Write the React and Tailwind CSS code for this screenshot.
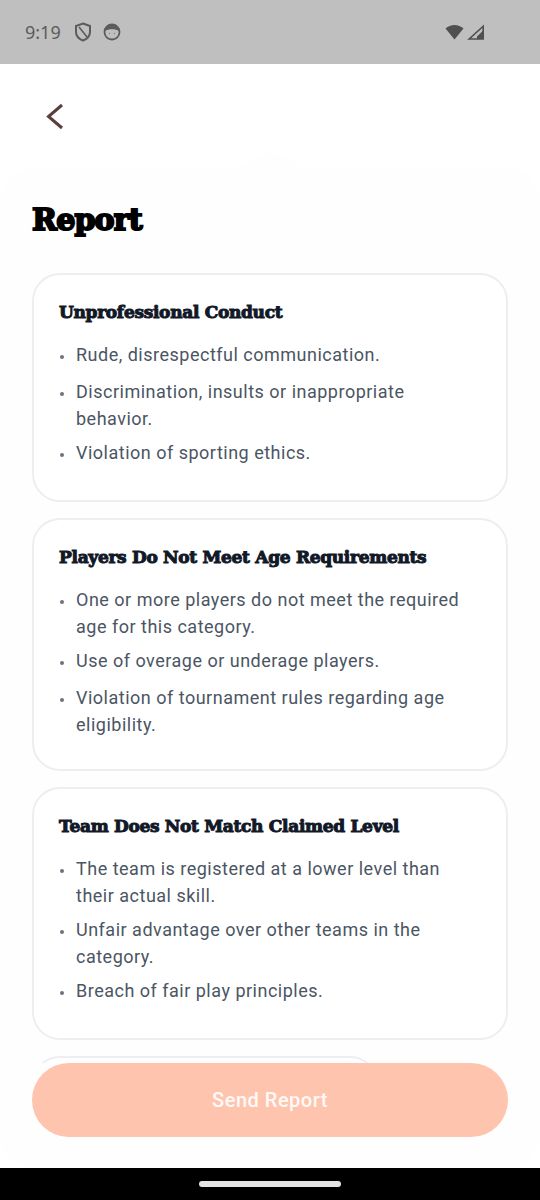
const sections = [
  {
    title: 'Unprofessional Conduct',
    items: ['Rude, disrespectful communication.', 'Discrimination, insults or inappropriate behavior.', 'Violation of sporting ethics.'],
  },
  {
    title: 'Players Do Not Meet Age Requirements',
    items: ['One or more players do not meet the required age for this category.', 'Use of overage or underage players.', 'Violation of tournament rules regarding age eligibility.'],
  },
  {
    title: 'Team Does Not Match Claimed Level',
    items: ['The team is registered at a lower level than their actual skill.', 'Unfair advantage over other teams in the category.', 'Breach of fair play principles.'],
  },
];

function StatusBar() {
  return (
    <div className="h-16 shrink-0 bg-[#bfbfbf] flex items-center pl-[25px] pr-[55px] text-[#5c5c5c]">
      <span className="text-[18px] font-['Noto_Sans',sans-serif] leading-none">9:19</span>
      <svg className="ml-[13px]" width="18" height="20" viewBox="0 0 18 20" fill="none" stroke="currentColor" strokeWidth="2">
        <path d="M9 1.5 L16 4 V10 C16 14 13 17 9 18.5 C5 17 2 14 2 10 V4 Z" />
        <path d="M5 5 L13 15" strokeWidth="1.6" />
      </svg>
      <svg className="ml-[11px]" width="18" height="18" viewBox="0 0 18 18" fill="none">
        <circle cx="9" cy="9" r="7.5" stroke="currentColor" strokeWidth="1.8" />
        <path d="M2 8 C3 3 6 1.5 9 1.5 C12 1.5 15 3 16 8 C13 5.5 5 5.5 2 8 Z" fill="currentColor" />
        <circle cx="6.5" cy="10.5" r="0.7" fill="currentColor" opacity="0.6" />
        <circle cx="11.5" cy="10.5" r="0.7" fill="currentColor" opacity="0.6" />
      </svg>
      <div className="ml-auto flex items-center gap-[2px]">
        <svg width="20" height="16" viewBox="0 0 20 16" fill="#4f4f4f">
          <path d="M0.5 4.5 C3 2.2 6.3 1 9.5 1 C12.7 1 16 2.2 18.5 4.5 L9.5 15.5 Z" />
        </svg>
        <svg width="18" height="16" viewBox="0 0 18 16" fill="none" stroke="#4f4f4f" strokeWidth="1.6">
          <path d="M16.2 2.2 V15 H2.2 Z" />
          <path d="M16.2 6.5 L10 12.5 V15 H16.2 Z" fill="#4f4f4f" stroke="none" />
        </svg>
      </div>
    </div>
  );
}

function ReportCard({ title, items, className = '' }) {
  return (
    <div className={`rounded-[28px] border-2 border-[#eceef1] bg-white pl-[25px] pr-[35px] pt-[25px] pb-[31px] ${className}`}>
      <h2 className="font-['DejaVu_Serif',serif] font-bold text-[17px] leading-[24px] tracking-[-0.3px] text-[#111827] [-webkit-text-stroke:1px_#111827] whitespace-nowrap">
        {title}
      </h2>
      <ul className="mt-[18px] flex flex-col gap-[8px]">
        {items.map((item) => (
          <li key={item} className="flex min-h-[29px] text-[18px] leading-[26.5px] tracking-[0.5px] text-[#4b5563]">
            <span className="w-[17px] shrink-0 pt-[13px] pl-[1px]">
              <span className="block w-[4px] h-[4px] rounded-full bg-[#6b7280]" />
            </span>
            <span>{item}</span>
          </li>
        ))}
      </ul>
    </div>
  );
}

export default function App() {
  return (
    <div className="w-[540px] h-[1200px] overflow-hidden bg-white flex flex-col font-['Roboto',sans-serif]">
      <StatusBar />
      <div className="h-[104px] shrink-0 pl-[44px] pt-[37px]">
        <svg width="22" height="30" viewBox="0 0 22 30" fill="none" stroke="#5a3f3a" strokeWidth="3">
          <path d="M18 4 L4.5 15.5 L18 27" />
        </svg>
      </div>
      <div className="relative flex-1 min-h-0 flex flex-col rounded-[32px] bg-[#fefefe] px-8">
        <svg className="absolute left-[230px] top-[-16px]" width="80" height="17" viewBox="0 0 80 17" fill="#fefefe">
          <path d="M0 17 C14 17 24 1 40 1 C56 1 66 17 80 17 Z" />
        </svg>
        <h1 className="mt-[30px] h-[44px] shrink-0 font-['DejaVu_Serif',serif] font-bold text-[30px] leading-[44px] tracking-[-0.8px] text-black [-webkit-text-stroke:2px_#000]">
          Report
        </h1>
        <div className="mt-[31px] flex-1 min-h-0 overflow-hidden flex flex-col gap-[16px]">
          {sections.map((s) => (
            <ReportCard key={s.title} {...s} className="shrink-0" />
          ))}
          <div className="w-[346px] h-[60px] shrink-0 rounded-[28px] border-2 border-[#eceef1] bg-white" />
        </div>
        <button className="shrink-0 h-[74px] mb-[31px] rounded-[37px] bg-[#fec4ae] text-white/90 text-[20px] font-medium tracking-[0.5px]">
          Send Report
        </button>
      </div>
      <div className="h-8 shrink-0 bg-black flex justify-center pt-[13px]">
        <div className="w-[142px] h-[6px] rounded-full bg-[#e4e4e4]" />
      </div>
    </div>
  );
}
